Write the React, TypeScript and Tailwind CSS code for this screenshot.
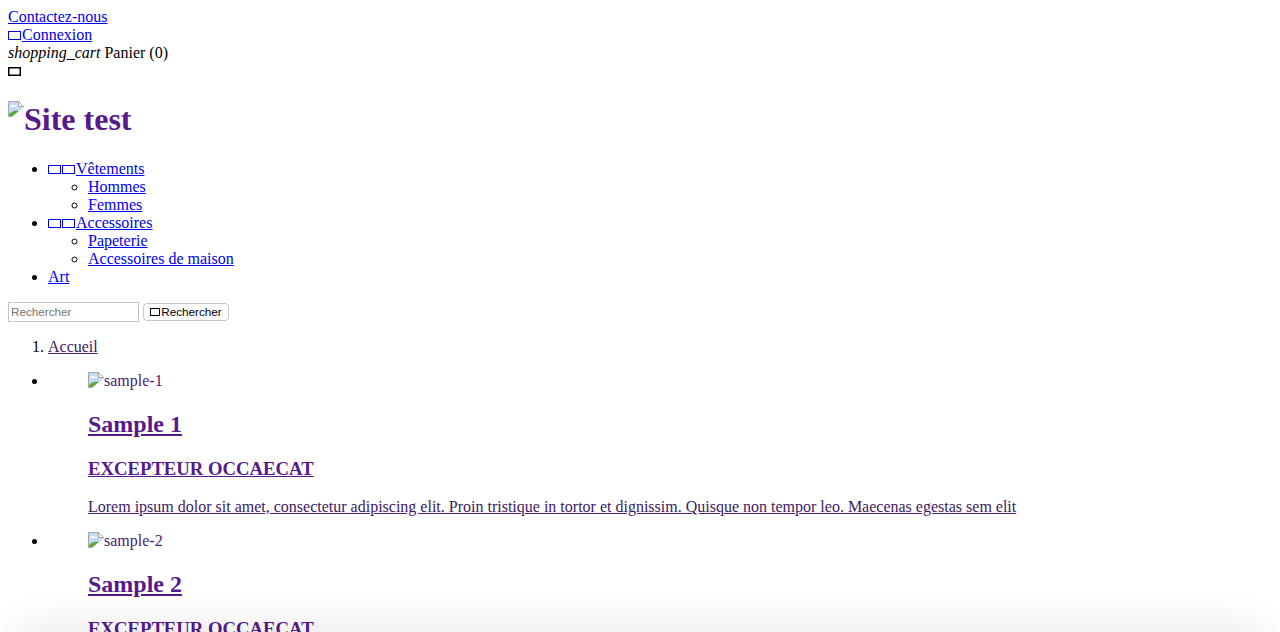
function Tofu() {
  return <span className="mr-px inline-block h-[9px] w-[13px] align-baseline border border-current" />;
}

function BlackTofu() {
  return (
    <svg width="13" height="9" viewBox="0 0 13 9" className="inline-block align-baseline">
      <rect x="0.75" y="0.75" width="11.5" height="7.5" fill="none" stroke="#000" strokeWidth="1.5" />
    </svg>
  );
}

function BrokenImage() {
  return (
    <svg width="16" height="16" viewBox="0 0 16 16" className="inline-block align-top">
      <path d="M0.5 0.5H10.5L15.5 5.5V15.5H0.5Z" fill="#c3d9f5" stroke="#a9a9a9" />
      <path d="M10.5 0.5V5.5H15.5Z" fill="#fff" stroke="#a9a9a9" />
      <path d="M2 6C3 3.5 6 3.5 7 5C8 4.5 9 5 9.5 6Z" fill="#fff" />
      <path d="M1 15V13C4 10 8 8.5 11 10L5 15Z" fill="#5fa83c" />
      <path d="M16 16H4L16 6Z" fill="#fff" />
    </svg>
  );
}

function Slide({ n }: { n: number }) {
  return (
    <li>
      <a href="#" className="block pl-10 text-[#551a8b] underline">
        <span className="inline-block h-[18px] align-top text-[#4a1a7a]">
          <BrokenImage />
          sample-{n}
        </span>
        <h2 className="mt-[21px] text-2xl leading-[27px] font-bold">Sample {n}</h2>
        <h3 className="mt-[20px] text-[18.72px] leading-[21px] font-bold">EXCEPTEUR OCCAECAT</h3>
        <p className="mt-[19px] mb-4 text-[#3c1a63] decoration-[#551a8b]">
          Lorem ipsum dolor sit amet, consectetur adipiscing elit. Proin tristique in tortor et dignissim. Quisque non
          tempor leo. Maecenas egestas sem elit
        </p>
      </a>
    </li>
  );
}

export default function App() {
  return (
    <div className="relative h-[632px] overflow-hidden bg-white p-2 font-['Liberation_Serif',serif] text-base leading-[18px] text-black">
      <div>
        <a href="#" className="text-[#0000ee] underline">
          Contactez-nous
        </a>
      </div>
      <div>
        <a href="#" className="text-[#0000ee] underline">
          <Tofu />
          Connexion
        </a>
      </div>
      <div>
        <i>shopping_cart</i> Panier (0)
      </div>
      <div>
        <BlackTofu />
      </div>

      <h1 className="mt-[21px] mb-[22px] h-[37px] text-[32px] leading-[37px] font-bold text-[#551a8b]">
        <BrokenImage />
        Site test
      </h1>

      <ul className="list-disc pl-10">
        <li>
          <a href="#" className="text-[#0000ee] underline">
            <Tofu />
            <Tofu />
            Vêtements
          </a>
          <ul className="list-[circle] pl-10">
            <li>
              <a href="#" className="text-[#0000ee] underline">
                Hommes
              </a>
            </li>
            <li>
              <a href="#" className="text-[#0000ee] underline">
                Femmes
              </a>
            </li>
          </ul>
        </li>
        <li>
          <a href="#" className="text-[#0000ee] underline">
            <Tofu />
            <Tofu />
            Accessoires
          </a>
          <ul className="list-[circle] pl-10">
            <li>
              <a href="#" className="text-[#0000ee] underline">
                Papeterie
              </a>
            </li>
            <li>
              <a href="#" className="text-[#0000ee] underline">
                Accessoires de maison
              </a>
            </li>
          </ul>
        </li>
        <li>
          <a href="#" className="text-[#0000ee] underline">
            Art
          </a>
        </li>
      </ul>

      <form className="mt-4 flex h-5 items-center gap-1 font-['Liberation_Sans',sans-serif] text-[11.7px]">
        <input
          placeholder="Rechercher"
          className="h-5 w-[131px] border border-[#c4c4c4] px-[2px] pb-[2px] text-[11.7px] placeholder:text-[#757575]"
        />
        <button
          type="button"
          className="flex h-[18px] w-[86px] items-center justify-center gap-px rounded-[4px] border border-[#c8c8c8] bg-white text-[11.7px] text-black"
        >
          <span className="h-[8px] w-[10px] border border-black" />
          Rechercher
        </button>
      </form>

      <ol className="mt-4 list-decimal pl-10">
        <li>
          <a href="#" className="text-[#3c1a63] underline decoration-[#551a8b]">
            Accueil
          </a>
        </li>
      </ol>

      <ul className="mt-4 list-disc pl-10">
        <Slide n={1} />
        <Slide n={2} />
      </ul>

      <div className="absolute right-5 -bottom-10 left-5 h-10 shadow-[0_0_45px_rgba(0,0,0,0.12)]" />
    </div>
  );
}
